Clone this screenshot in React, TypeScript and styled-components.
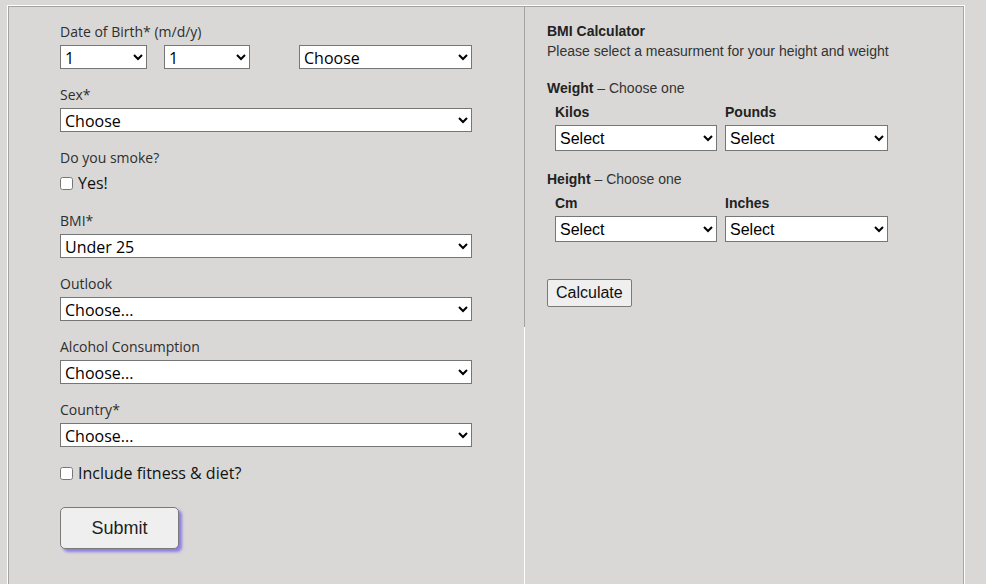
import React from 'react';
import styled, { createGlobalStyle } from 'styled-components';

const GlobalStyle = createGlobalStyle`
  html, body {
    margin: 0;
    padding: 0;
    background: #d9d8d6;
    overflow: hidden;
  }
`;

// outer white edge + inner grey edge, open at the bottom
const Frame = styled.div`
  margin: 5px 0 0 7px;
  width: 958px;
  height: calc(100vh - 5px);
  box-sizing: border-box;
  border: 1px solid #ffffff;
  border-bottom: none;
  display: flex;
`;

const Inner = styled.div`
  flex: 1;
  display: flex;
  border: 1px solid #a3a3a3;
  border-bottom: none;
`;

const LeftCol = styled.div`
  width: 515px;
  flex-shrink: 0;
  font-family: "Open Sans", Lato, sans-serif;
`;

const Form = styled.form`
  width: 412px;
  margin-left: 51px;
  padding-top: 16px;
`;

const FieldGroup = styled.div<{ $after?: number }>`
  margin-bottom: ${({ $after }) => ($after ?? 17)}px;
`;

const Label = styled.label`
  display: block;
  font-size: 14px;
  line-height: 17px;
  color: #2e2e2e;
  margin-bottom: 5px;
`;

const Row = styled.div`
  display: flex;
  align-items: center;
`;

const Select = styled.select<{ $w?: number; $push?: boolean }>`
  width: ${({ $w }) => ($w ? `${$w}px` : '100%')};
  height: 24px;
  box-sizing: border-box;
  margin: 0;
  margin-left: ${({ $push }) => ($push ? 'auto' : '0')};
  padding: 0;
  border: 1px solid #767676;
  border-radius: 0;
  background: #ffffff;
  color: #000;
  font-family: "Open Sans", Lato, sans-serif;
  font-size: 16px;
`;

const SmallGap = styled.span`
  display: inline-block;
  width: 17px;
`;

const CheckRow = styled.label`
  display: flex;
  align-items: center;
  height: 24px;
  font-size: 16px;
  color: #111;

  input {
    width: 13px;
    height: 13px;
    margin: 0 5px 0 0;
  }
`;

const SubmitButton = styled.button`
  width: 119px;
  height: 42px;
  margin-top: 22px;
  border: 1px solid #7a7a7a;
  border-radius: 5px;
  background: #efefef;
  color: #1e1e1e;
  font-family: "Liberation Sans", Arial, sans-serif;
  font-size: 18px;
  box-shadow: 3px 3px 3px #8d7de3;
`;

const RightCol = styled.div`
  flex: 1;
  border-left: 1px solid #ffffff;
  font-family: "Liberation Sans", Arial, sans-serif;
  color: #222;
`;

const CalcBox = styled.div`
  margin-left: -1px;
  border-left: 1px solid #a3a3a3;
  padding: 14px 22px 20px 22px;
  font-size: 14px;
  line-height: 20px;
`;

const Title = styled.div`
  font-weight: bold;
`;

const Intro = styled.div`
  color: #333;
  margin-bottom: 17px;
`;

const Section = styled.div`
  margin-bottom: 18px;
`;

const SectionHead = styled.div`
  color: #333;
  margin-bottom: 4px;

  b {
    color: #222;
  }
`;

const UnitGrid = styled.div`
  display: grid;
  grid-template-columns: 162px 163px;
  column-gap: 8px;
  row-gap: 3px;
  padding-left: 8px;
`;

const UnitLabel = styled.div`
  font-weight: bold;
`;

const UnitSelect = styled.select`
  width: 100%;
  height: 26px;
  box-sizing: border-box;
  margin: 0;
  padding: 0;
  border: 1px solid #767676;
  border-radius: 0;
  background: #ffffff;
  color: #000;
  font-family: "Liberation Sans", Arial, sans-serif;
  font-size: 16px;
`;

const CalcButton = styled.button`
  height: 28px;
  margin-top: 19px;
  padding: 0 8px;
  border: 1px solid #7a7a7a;
  border-radius: 2px;
  background: #efefef;
  color: #111;
  font-family: "Liberation Sans", Arial, sans-serif;
  font-size: 16px;
`;

const fields = [
  { label: 'BMI*', value: 'Under 25' },
  { label: 'Outlook', value: 'Choose...' },
  { label: 'Alcohol Consumption', value: 'Choose...' },
  { label: 'Country*', value: 'Choose...' },
];

const Measure: React.FC<{ title: string; units: [string, string] }> = ({ title, units }) => (
  <Section>
    <SectionHead>
      <b>{title}</b> – Choose one
    </SectionHead>
    <UnitGrid>
      <UnitLabel>{units[0]}</UnitLabel>
      <UnitLabel>{units[1]}</UnitLabel>
      <UnitSelect defaultValue="">
        <option value="">Select</option>
      </UnitSelect>
      <UnitSelect defaultValue="">
        <option value="">Select</option>
      </UnitSelect>
    </UnitGrid>
  </Section>
);

export default function App() {
  return (
    <>
      <GlobalStyle />
      <Frame>
        <Inner>
          <LeftCol>
            <Form onSubmit={(e) => e.preventDefault()}>
              <FieldGroup>
                <Label>Date of Birth* (m/d/y)</Label>
                <Row>
                  <Select $w={87}>
                    <option>1</option>
                  </Select>
                  <SmallGap />
                  <Select $w={86}>
                    <option>1</option>
                  </Select>
                  <Select $w={173} $push>
                    <option>Choose</option>
                  </Select>
                </Row>
              </FieldGroup>

              <FieldGroup>
                <Label>Sex*</Label>
                <Select>
                  <option>Choose</option>
                </Select>
              </FieldGroup>

              <FieldGroup>
                <Label>Do you smoke?</Label>
                <CheckRow>
                  <input type="checkbox" />
                  Yes!
                </CheckRow>
              </FieldGroup>

              {fields.map((f, i) => (
                <FieldGroup key={f.label} $after={i === fields.length - 1 ? 14 : 17}>
                  <Label>{f.label}</Label>
                  <Select>
                    <option>{f.value}</option>
                  </Select>
                </FieldGroup>
              ))}

              <CheckRow>
                <input type="checkbox" />
                Include fitness &amp; diet?
              </CheckRow>

              <SubmitButton type="submit">Submit</SubmitButton>
            </Form>
          </LeftCol>

          <RightCol>
            <CalcBox>
              <Title>BMI Calculator</Title>
              <Intro>Please select a measurment for your height and weight</Intro>
              <Measure title="Weight" units={['Kilos', 'Pounds']} />
              <Measure title="Height" units={['Cm', 'Inches']} />
              <CalcButton type="button">Calculate</CalcButton>
            </CalcBox>
          </RightCol>
        </Inner>
      </Frame>
    </>
  );
}
